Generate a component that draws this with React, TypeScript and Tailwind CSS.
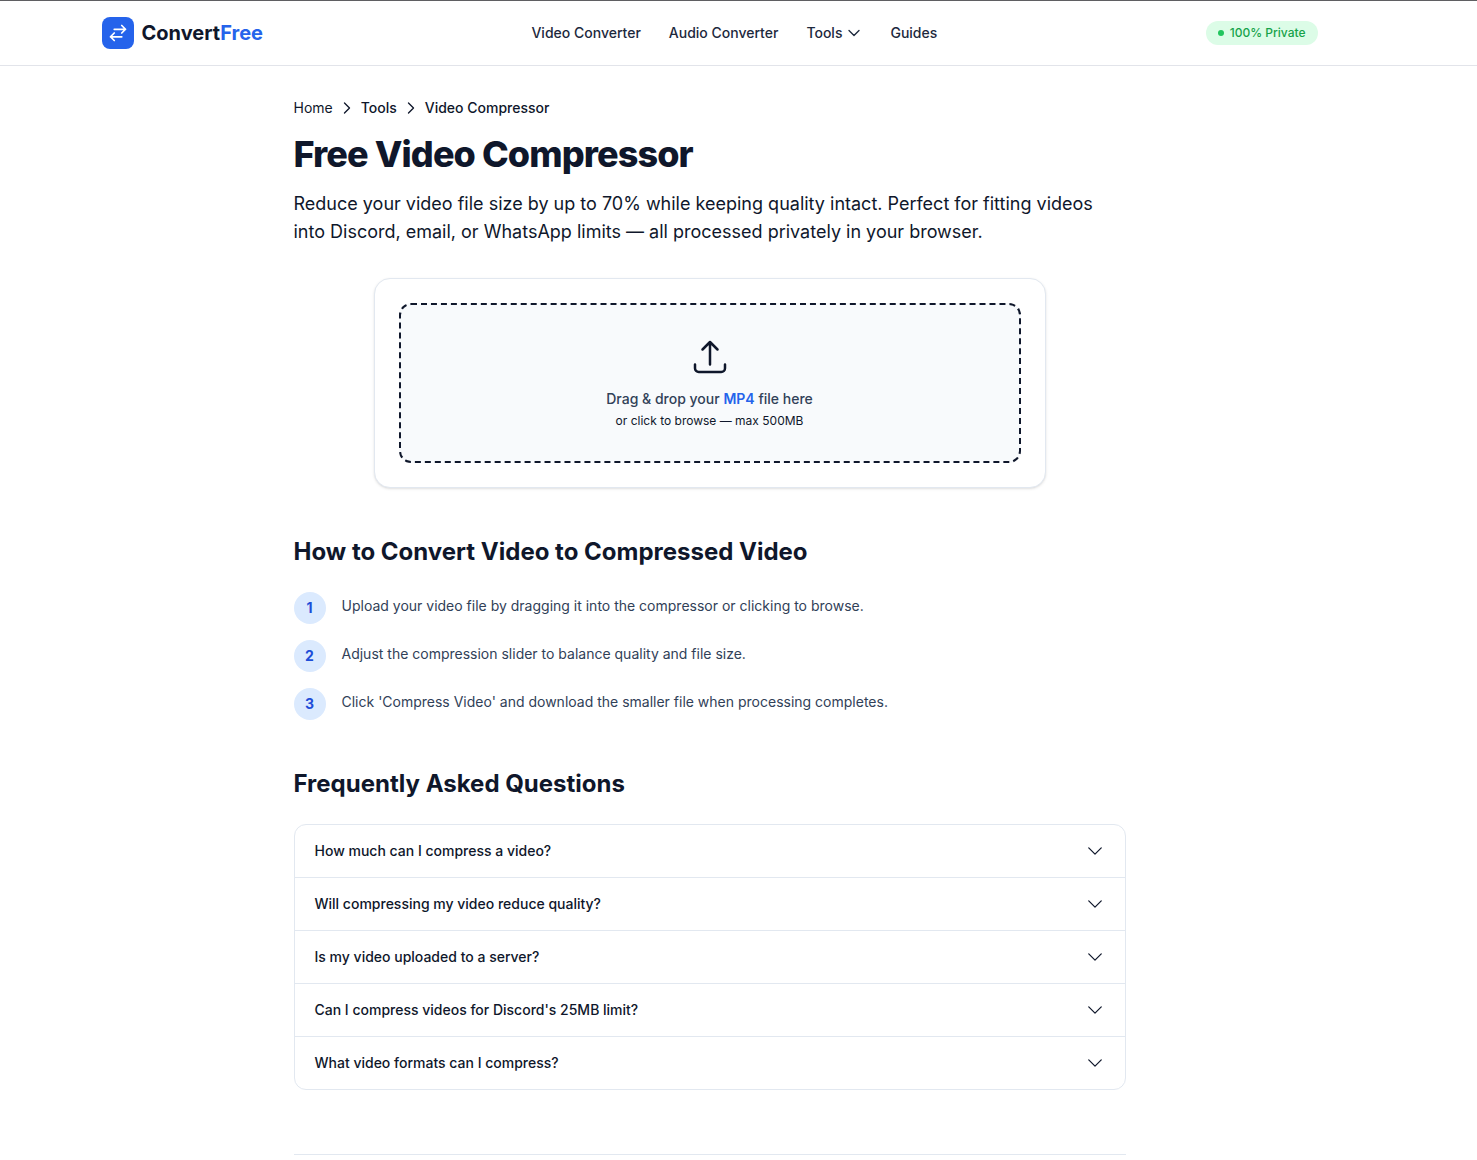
import React, { useState } from 'react';

function Icon({ d, className, strokeWidth = 2 }: { d: string; className?: string; strokeWidth?: number }) {
  return (
    <svg className={className} fill="none" viewBox="0 0 24 24" stroke="currentColor" strokeWidth={strokeWidth}>
      <path strokeLinecap="round" strokeLinejoin="round" d={d} />
    </svg>
  );
}

const chevronDown = 'm19.5 8.25-7.5 7.5-7.5-7.5';
const chevronRight = 'm8.25 4.5 7.5 7.5-7.5 7.5';
const swap = 'M7.5 21 3 16.5m0 0L7.5 12M3 16.5h13.5m0-13.5L21 7.5m0 0L16.5 12M21 7.5H7.5';
const upload = 'M3 16.5v2.25A2.25 2.25 0 0 0 5.25 21h13.5A2.25 2.25 0 0 0 21 18.75V16.5m-13.5-9L12 3m0 0 4.5 4.5M12 3v13.5';

const steps = [
  'Upload your video file by dragging it into the compressor or clicking to browse.',
  'Adjust the compression slider to balance quality and file size.',
  "Click 'Compress Video' and download the smaller file when processing completes.",
];

const faqs = [
  'How much can I compress a video?',
  'Will compressing my video reduce quality?',
  'Is my video uploaded to a server?',
  "Can I compress videos for Discord's 25MB limit?",
  'What video formats can I compress?',
];

function Header() {
  return (
    <header className="border-t border-b border-t-[#5f5f62] border-b-[#e2e4ea] bg-white pr-[58px]">
      <div className="mx-auto flex h-16 max-w-7xl items-center justify-between px-8">
        <a href="#" className="flex items-center gap-2">
          <span className="flex h-8 w-8 items-center justify-center rounded-lg bg-[#2563eb] text-white">
            <Icon d={swap} className="h-5 w-5" strokeWidth={2.1} />
          </span>
          <span className="text-xl font-bold">
            Convert<span className="text-[#2563eb]">Free</span>
          </span>
        </a>

        <nav className="flex items-center gap-7 text-sm font-medium text-slate-800">
          <a href="#">Video Converter</a>
          <a href="#">Audio Converter</a>
          <button className="flex items-center gap-1">
            Tools
            <Icon d={chevronDown} className="h-4 w-4" />
          </button>
          <a href="#">Guides</a>
        </nav>

        <span className="flex items-center gap-1.5 rounded-full bg-[#dcfce7] px-3 py-1 text-xs font-medium text-[#16a34a]">
          <span className="h-1.5 w-1.5 rounded-full bg-[#22c55e]" />
          100% Private
        </span>
      </div>
    </header>
  );
}

export default function App() {
  const [dragging, setDragging] = useState(false);

  return (
    <div className="h-[1160px] overflow-hidden bg-white font-['Inter',sans-serif] text-slate-900">
      <Header />

      <div className="pr-[58px]">
        <main className="mx-auto max-w-4xl px-8 py-8">
          {/* Breadcrumb */}
          <nav className="mb-4 flex items-center gap-1.5 text-sm">
            <a href="#">Home</a>
            <Icon d={chevronRight} className="h-4 w-4" />
            <a href="#" className="font-medium">Tools</a>
            <Icon d={chevronRight} className="h-4 w-4" />
            <span className="font-medium">Video Compressor</span>
          </nav>

          <h1 className="mb-4 text-4xl font-extrabold tracking-tight">Free Video Compressor</h1>
          <p className="mb-8 text-lg">
            Reduce your video file size by up to 70% while keeping quality intact. Perfect for fitting videos into Discord, email, or WhatsApp limits — all processed privately in your browser.
          </p>

          {/* Dropzone */}
          <div className="mx-auto mb-12 max-w-2xl rounded-2xl border border-slate-200 bg-white p-6 shadow-sm">
            <div
              className={`flex cursor-pointer flex-col items-center rounded-xl border-2 border-dashed p-8 text-center ${dragging ? 'border-blue-500 bg-blue-50' : 'border-slate-900 bg-slate-50'}`}
              onDragOver={(e) => { e.preventDefault(); setDragging(true); }}
              onDragLeave={() => setDragging(false)}
              onDrop={(e) => { e.preventDefault(); setDragging(false); }}
            >
              <Icon d={upload} className="mb-3 h-10 w-10" strokeWidth={1.5} />
              <p className="text-sm font-medium text-slate-700">
                Drag &amp; drop your <span className="font-semibold text-[#2563eb]">MP4</span> file here
              </p>
              <p className="mt-1 text-xs">or click to browse — max 500MB</p>
            </div>
          </div>

          {/* Steps */}
          <section className="mb-12">
            <h2 className="mb-6 text-2xl font-bold">How to Convert Video to Compressed Video</h2>
            <ol className="space-y-4">
              {steps.map((step, i) => (
                <li key={step} className="flex items-start gap-4">
                  <span className="flex h-8 w-8 shrink-0 items-center justify-center rounded-full bg-[#dbeafe] text-sm font-bold text-[#1d4ed8]">
                    {i + 1}
                  </span>
                  <p className="pt-1 text-sm text-slate-700">{step}</p>
                </li>
              ))}
            </ol>
          </section>

          {/* FAQ */}
          <section>
            <h2 className="mb-6 text-2xl font-bold">Frequently Asked Questions</h2>
            <div className="divide-y divide-slate-200 rounded-xl border border-slate-200">
              {faqs.map((question) => (
                <button key={question} className="flex w-full items-center justify-between px-5 py-4 text-left text-sm font-medium">
                  {question}
                  <Icon d={chevronDown} className="h-5 w-5" strokeWidth={1.5} />
                </button>
              ))}
            </div>
          </section>

          <div className="mt-16 border-t border-slate-200" />
        </main>
      </div>
    </div>
  );
}
